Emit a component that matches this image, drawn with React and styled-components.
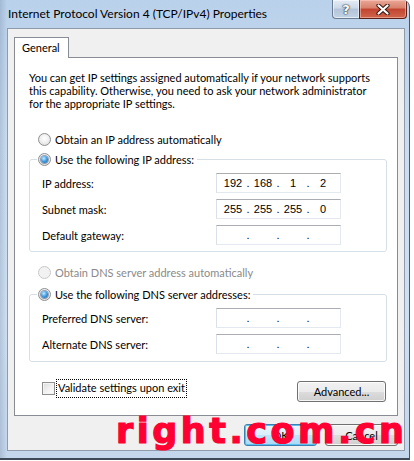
import React from "react";
import styled, { createGlobalStyle } from "styled-components";

const GlobalStyle = createGlobalStyle`
  * { box-sizing: border-box; }
  html, body { margin: 0; padding: 0; background: #fff; }
  body {
    font-family: Lato, "Liberation Sans", sans-serif;
    font-size: 11px;
    color: #000;
  }
`;

// Fenster mit Aero-Rahmen
const Window = styled.div`
  position: relative;
  width: 410px;
  height: 460px;
  display: flex;
  flex-direction: column;
  overflow: hidden;
  border-top-right-radius: 7px;
  border-right: 1px solid #4a5668;
  border-bottom: 2px solid #3e4857;
  background:
    linear-gradient(to right, rgba(60, 80, 110, 0.18) 0, rgba(60, 80, 110, 0) 7px),
    linear-gradient(to bottom, #bad1eb 0%, #c9dcf1 30%, #cfe0f3 70%, #c4d6ec 100%);
`;

const TitleBar = styled.div`
  height: 28px;
  display: flex;
  align-items: flex-start;
`;

const Title = styled.div`
  padding: 7px 0 0 8px;
  font-size: 12px;
  line-height: 14px;
  white-space: nowrap;
`;

const CaptionButtons = styled.div`
  margin-left: auto;
  margin-right: 2px;
  display: flex;
`;

const HelpButton = styled.div`
  width: 27px;
  height: 19px;
  border: 1px solid #6b7b90;
  border-top: none;
  border-right: none;
  border-radius: 0 0 0 4px;
  background: linear-gradient(to bottom, #e4ecf5 0%, #cdd9e7 45%, #b4c4d8 50%, #c2d3e6 100%);
  box-shadow: inset 0 0 0 1px rgba(255, 255, 255, 0.55);
  display: flex;
  align-items: center;
  justify-content: center;
  font-family: "DejaVu Sans", sans-serif;
  font-weight: bold;
  font-size: 13px;
  color: #fff;
  text-shadow: 0 0 1px #2f3b4b, 0 0 1px #2f3b4b, 0 0 2px #2f3b4b;
`;

const CloseButton = styled.div`
  width: 48px;
  height: 19px;
  border: 1px solid #5b2018;
  border-top: none;
  border-radius: 0 0 4px 0;
  background: linear-gradient(to bottom, #e9a898 0%, #d9806c 45%, #c24430 50%, #d1654c 100%);
  box-shadow: inset 0 0 0 1px rgba(255, 210, 200, 0.5);
  display: flex;
  align-items: center;
  justify-content: center;
`;

const Client = styled.div`
  flex: 1;
  margin: 0 4px 7px 7px;
  padding: 8px 6px 0 6px;
  background: #f0f0f0;
  border: 1px solid #8f9aab;
  display: flex;
  flex-direction: column;
`;

const TabStrip = styled.div`
  display: flex;
  height: 20px;
`;

const Tab = styled.div`
  position: relative;
  z-index: 1;
  height: 21px;
  padding: 3px 8px 0 7px;
  background: #fff;
  border: 1px solid #898c95;
  border-bottom: none;
  line-height: 14px;
`;

const Panel = styled.div`
  height: 359px;
  background: #fff;
  border: 1px solid #898c95;
  padding: 13px 10px 0 14px;
  display: flex;
  flex-direction: column;
`;

const Intro = styled.p`
  margin: 0;
  line-height: 13px;
  white-space: nowrap;
`;

const RadioRow = styled.label`
  display: flex;
  align-items: center;
  height: 16px;
  margin-top: ${(p) => p.$top || 0}px;
  padding-left: ${(p) => p.$indent || 0}px;
  color: ${(p) => (p.$disabled ? "#8a8a8a" : "#000")};
  white-space: nowrap;
`;

const RadioDot = styled.span`
  width: 13px;
  height: 13px;
  margin-right: 4px;
  border-radius: 50%;
  border: 1px solid ${(p) => (p.$disabled ? "#c9c9c9" : "#8e8f8f")};
  background: ${(p) =>
    p.$disabled
      ? "#f2f2f2"
      : "radial-gradient(circle at 50% 40%, #ffffff 0, #f1f1f1 45%, #d4d4d4 100%)"};
  display: flex;
  align-items: center;
  justify-content: center;
  flex: none;

  &::after {
    content: "";
    display: ${(p) => (p.$checked ? "block" : "none")};
    width: 7px;
    height: 7px;
    border-radius: 50%;
    background: radial-gradient(circle at 40% 35%, #c9ecff 0, #4aa0e2 45%, #15569a 100%);
    box-shadow: 0 0 0 1px rgba(20, 60, 110, 0.45);
  }
`;

const Group = styled.fieldset`
  margin: ${(p) => p.$top || 0}px 0 0 0;
  width: 358px;
  min-width: 0;
  padding: 0 0 ${(p) => p.$bottom || 6}px 7px;
  border: 1px solid #d5dfe5;
  border-radius: 3px;
`;

const Legend = styled.legend`
  padding: 0 3px 0 1px;
`;

const FieldRows = styled.div`
  display: grid;
  grid-template-columns: 174px 125px;
  row-gap: 6px;
  margin-top: 6px;
  padding-left: 5px;
  align-items: center;
`;

const FieldLabel = styled.span`
  white-space: nowrap;
`;

const IpBox = styled.div`
  width: 125px;
  height: 20px;
  background: #fff;
  border: 1px solid #e3e9ef;
  border-top-color: #abadb3;
  border-left-color: #dbdfe6;
  display: flex;
  align-items: center;
  padding-left: 4px;
  font-family: "Liberation Sans", Arial, sans-serif;
  font-size: 11px;
`;

const Octet = styled.span`
  width: 24px;
  text-align: center;
`;

const Dot = styled.span`
  width: 6px;
  text-align: center;
`;

const OptionsRow = styled.div`
  display: flex;
  align-items: flex-start;
  justify-content: space-between;
  width: 358px;
  margin-top: 18px;
`;

const CheckLabel = styled.label`
  display: flex;
  align-items: center;
  margin-left: 13px;
  white-space: nowrap;
`;

const CheckBox = styled.span`
  width: 13px;
  height: 13px;
  margin-right: 2px;
  border: 1px solid #8e8f8f;
  background: linear-gradient(135deg, #dcdcdc 0%, #f4f4f4 60%, #ffffff 100%);
  box-shadow: inset 0 0 0 1px #f4f4f4;
`;

const FocusText = styled.span`
  outline: 1px dotted #000;
  outline-offset: 0;
  padding: 1px 1px 2px 1px;
  line-height: 14px;
`;

const Button = styled.button`
  width: ${(p) => p.$width || 73}px;
  height: ${(p) => p.$height || 22}px;
  margin-top: ${(p) => p.$top || 0}px;
  margin-right: ${(p) => p.$right || 0}px;
  padding: 0;
  font-family: inherit;
  font-size: 11px;
  color: #000;
  border-radius: 3px;
  border: 1px solid ${(p) => (p.$default ? "#3c7fb1" : "#707070")};
  background: ${(p) =>
    p.$default
      ? "linear-gradient(to bottom, #eaf6fd 0%, #d9f0fc 50%, #bee6fd 51%, #a7d9f5 100%)"
      : "linear-gradient(to bottom, #f2f2f2 0%, #ebebeb 50%, #dddddd 51%, #cfcfcf 100%)"};
  box-shadow: inset 0 0 0 1px ${(p) => (p.$default ? "#5bc0f0" : "rgba(255,255,255,0.8)")};
`;

const DialogButtons = styled.div`
  display: flex;
  justify-content: flex-end;
  gap: 8px;
  margin-top: 8px;
`;

// Wasserzeichen liegt über den Buttons
const Watermark = styled.div`
  position: absolute;
  left: 116px;
  top: 414px;
  font-family: "DejaVu Sans", sans-serif;
  font-weight: bold;
  font-size: 35px;
  line-height: 34px;
  letter-spacing: 3.5px;
  color: #ff0033;
  -webkit-text-stroke: 1.2px #ff0033;
  white-space: nowrap;
  pointer-events: none;
`;

const IpField = ({ parts }) => (
  <IpBox>
    {[0, 1, 2, 3].map((i) => (
      <React.Fragment key={i}>
        <Octet>{parts ? parts[i] : ""}</Octet>
        {i < 3 && <Dot>.</Dot>}
      </React.Fragment>
    ))}
  </IpBox>
);

const App = () => {
  return (
    <>
      <GlobalStyle />
      <Window>
        <TitleBar>
          <Title>Internet Protocol Version 4 (TCP/IPv4) Properties</Title>
          <CaptionButtons>
            <HelpButton>?</HelpButton>
            <CloseButton>
              <svg width="14" height="11" viewBox="0 0 14 11">
                <path d="M2.5 1.5 L11.5 9.5 M11.5 1.5 L2.5 9.5" stroke="#3a1812" strokeWidth="4.2" strokeLinecap="round" />
                <path d="M2.5 1.5 L11.5 9.5 M11.5 1.5 L2.5 9.5" stroke="#fff" strokeWidth="2.2" strokeLinecap="round" />
              </svg>
            </CloseButton>
          </CaptionButtons>
        </TitleBar>

        <Client>
          <TabStrip>
            <Tab>General</Tab>
          </TabStrip>
          <Panel>
            <Intro>
              You can get IP settings assigned automatically if your network supports
              <br />
              this capability. Otherwise, you need to ask your network administrator
              <br />
              for the appropriate IP settings.
            </Intro>

            <RadioRow $top={21} $indent={9}>
              <RadioDot />
              Obtain an IP address automatically
            </RadioRow>

            <Group $top={4} $bottom={6}>
              <Legend>
                <RadioRow>
                  <RadioDot $checked />
                  Use the following IP address:
                </RadioRow>
              </Legend>
              <FieldRows>
                <FieldLabel>IP address:</FieldLabel>
                <IpField parts={["192", "168", "1", "2"]} />
                <FieldLabel>Subnet mask:</FieldLabel>
                <IpField parts={["255", "255", "255", "0"]} />
                <FieldLabel>Default gateway:</FieldLabel>
                <IpField />
              </FieldRows>
            </Group>

            <RadioRow $top={12} $indent={9} $disabled>
              <RadioDot $disabled />
              Obtain DNS server address automatically
            </RadioRow>

            <Group $top={6} $bottom={7}>
              <Legend>
                <RadioRow>
                  <RadioDot $checked />
                  Use the following DNS server addresses:
                </RadioRow>
              </Legend>
              <FieldRows>
                <FieldLabel>Preferred DNS server:</FieldLabel>
                <IpField />
                <FieldLabel>Alternate DNS server:</FieldLabel>
                <IpField />
              </FieldRows>
            </Group>

            <OptionsRow>
              <CheckLabel>
                <CheckBox />
                <FocusText>Validate settings upon exit</FocusText>
              </CheckLabel>
              <Button $width={89} $height={21} $top={1} $right={1}>
                Advanced...
              </Button>
            </OptionsRow>
          </Panel>

          <DialogButtons>
            <Button $default>OK</Button>
            <Button>Cancel</Button>
          </DialogButtons>
        </Client>

        <Watermark>right.com.cn</Watermark>
      </Window>
    </>
  );
};

export default App;
